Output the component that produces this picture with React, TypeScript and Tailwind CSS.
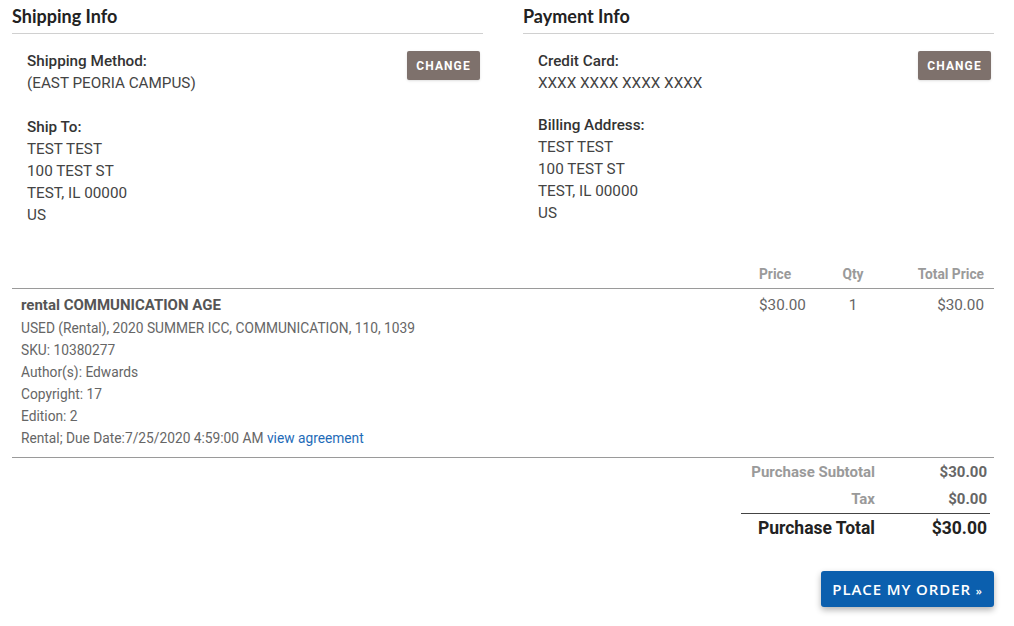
import React from "react"

const body = { fontFamily: "Roboto, 'Liberation Sans', sans-serif" }
const heading = { fontFamily: "Lato, 'Open Sans', sans-serif" }

function ChangeButton() {
  return (
    <button
      type="button"
      className="h-[29px] w-[73px] rounded-[2px] bg-[#7e716c] text-[12px] font-bold tracking-[1.1px] text-white shadow-sm"
    >
      CHANGE
    </button>
  )
}

function InfoPanel({
  title,
  first,
  firstValue,
  second,
  lines,
  gapClass,
}: {
  title: string
  first: string
  firstValue: string
  second: string
  lines: string[]
  gapClass: string
}) {
  return (
    <div className="w-[471px]">
      <h2
        style={heading}
        className="border-b border-[#d0d0d0] pb-[6px] pt-[5px] text-[18px] font-bold leading-[22px] text-[#222]"
      >
        {title}
      </h2>
      <div className="flex justify-between pl-[15px] pr-[3px] pt-[16px]">
        <div className="text-[15.25px] leading-[22px] text-[#444]">
          <div className="font-medium text-[#333]">{first}</div>
          <div>{firstValue}</div>
          <div className={`${gapClass} font-medium text-[#333]`}>{second}</div>
          {lines.map((l) => (
            <div key={l}>{l}</div>
          ))}
        </div>
        <div className="pt-px">
          <ChangeButton />
        </div>
      </div>
    </div>
  )
}

export default function App() {
  const address = ["TEST TEST", "100 TEST ST", "TEST, IL 00000", "US"]
  const details = [
    "USED (Rental), 2020 SUMMER ICC, COMMUNICATION, 110, 1039",
    "SKU: 10380277",
    "Author(s): Edwards",
    "Copyright: 17",
    "Edition: 2",
  ]

  return (
    <div style={body} className="min-h-[626px] bg-white pl-[12px] pr-[20px]">
      <div className="flex justify-between">
        <InfoPanel
          title="Shipping Info"
          first="Shipping Method:"
          firstValue="(EAST PEORIA CAMPUS)"
          second="Ship To:"
          lines={address}
          gapClass="mt-[22px]"
        />
        <InfoPanel
          title="Payment Info"
          first="Credit Card:"
          firstValue="XXXX XXXX XXXX XXXX"
          second="Billing Address:"
          lines={address}
          gapClass="mt-[20px]"
        />
      </div>

      {/* cart table */}
      <div className="mt-[39px]">
        <div className="flex border-b border-[#9a9a9a] pb-[5px] text-[13.75px] font-bold leading-[18px] text-[#9a9a9a]">
          <div className="flex-1" />
          <div className="w-[72px]">Price</div>
          <div className="w-[44px] text-center">Qty</div>
          <div className="w-[119px] pr-[10px] text-right">Total Price</div>
        </div>

        <div className="flex border-b border-[#9a9a9a] pb-[8px] pt-[5px] text-[#666]">
          <div className="flex-1 pl-[9px]">
            <div className="mb-px text-[15px] font-bold leading-[22px] text-[#555]">
              rental COMMUNICATION AGE
            </div>
            {details.map((d) => (
              <div key={d} className="text-[13.75px] leading-[22px]">
                {d}
              </div>
            ))}
            <div className="text-[13.75px] leading-[22px]">
              Rental; Due Date:7/25/2020 4:59:00 AM{" "}
              <a href="#" className="text-[#1e6bb8]">
                view agreement
              </a>
            </div>
          </div>
          <div className="w-[72px] text-[15.25px] leading-[22px]">$30.00</div>
          <div className="w-[44px] text-center text-[15.25px] leading-[22px]">1</div>
          <div className="w-[119px] pr-[10px] text-right text-[15.25px] leading-[22px]">$30.00</div>
        </div>

        {/* totals */}
        <div className="flex justify-end pr-[4px]">
          <div className="w-[249px] pt-[1px]">
            <div className="flex h-[27px] items-center text-[15px] font-bold">
              <div className="w-[134px] whitespace-nowrap text-right text-[#9a9a9a]">Purchase Subtotal</div>
              <div className="w-[112px] text-right text-[#666]">$30.00</div>
            </div>
            <div className="flex h-[28px] items-center border-b border-[#444] text-[15px] font-bold">
              <div className="w-[134px] text-right text-[#9a9a9a]">Tax</div>
              <div className="w-[112px] text-right text-[#666]">$0.00</div>
            </div>
            <div className="flex h-[28px] items-center text-[17.5px] font-bold text-[#222]">
              <div className="w-[134px] whitespace-nowrap text-right">Purchase Total</div>
              <div className="w-[112px] text-right">$30.00</div>
            </div>
          </div>
        </div>

        <div className="mt-[29px] flex justify-end">
          <button
            type="button"
            style={{ fontFamily: "'Open Sans', 'DejaVu Sans', sans-serif" }}
            className="h-[36px] w-[173px] rounded-[3px] bg-[#0b5fae] text-[15px] font-semibold tracking-[0.9px] text-white shadow-[0_3px_6px_rgba(0,0,0,0.3)]"
          >
            PLACE MY ORDER <span className="text-[11px]">»</span>
          </button>
        </div>
      </div>
    </div>
  )
}
